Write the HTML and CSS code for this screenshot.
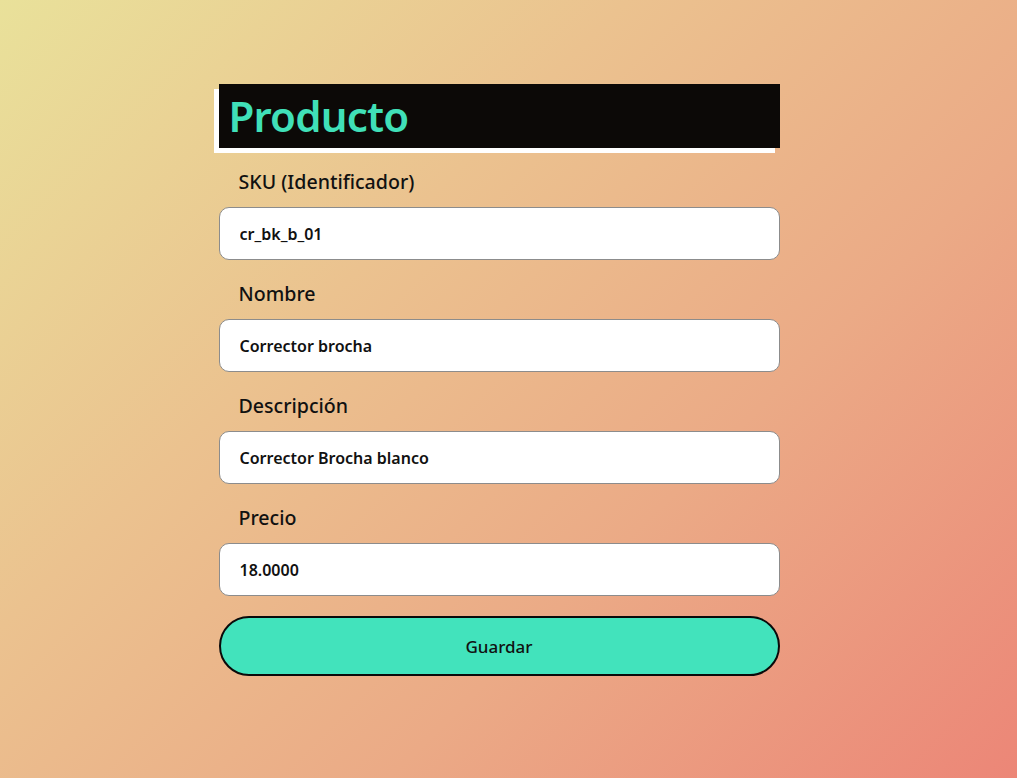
FILE: index.html
```html
<!DOCTYPE html>
<html lang="es">
<head>
<meta charset="utf-8">
<title>Producto</title>
<link rel="stylesheet" href="styles.css">
</head>
<body>
<main class="page">
  <form class="product-form">
    <h1 class="title">Producto</h1>
    <label class="field-label" for="sku">SKU (Identificador)</label>
    <input class="field-input" id="sku" type="text" value="cr_bk_b_01">
    <label class="field-label" for="nombre">Nombre</label>
    <input class="field-input" id="nombre" type="text" value="Corrector brocha">
    <label class="field-label" for="desc">Descripción</label>
    <input class="field-input" id="desc" type="text" value="Corrector Brocha blanco">
    <label class="field-label" for="precio">Precio</label>
    <input class="field-input" id="precio" type="text" value="18.0000">
    <button class="save-btn" type="button">Guardar</button>
  </form>
</main>
</body>
</html>
```

FILE: styles.css
```css
html, body {
  margin: 0;
  padding: 0;
}
body {
  min-height: 100vh;
  background: linear-gradient(135deg, #e9e19a 0%, #ebc28f 35%, #ebaa86 65%, #ec8677 100%);
  font-family: "Noto Sans", "Open Sans", sans-serif;
  color: #111;
}
.page {
  display: flex;
  justify-content: center;
  padding: 84px 19px 0 0;
  min-height: 778px;
  box-sizing: border-box;
}
.product-form {
  width: 561px;
  display: flex;
  flex-direction: column;
}
.title {
  margin: 0;
  height: 64px;
  line-height: 64px;
  padding-left: 10px;
  background: #0c0907;
  color: #40e0b8;
  font-size: 42px;
  font-weight: 600;
  letter-spacing: -0.8px;
  box-shadow: -5px 5px 0 #ffffff;
}
.field-label {
  margin: 21px 0 12px;
  padding-left: 20px;
  font-size: 19.6px;
  line-height: 26px;
  font-weight: 500;
  color: #111;
}
.field-input {
  height: 53px;
  box-sizing: border-box;
  border: 1px solid #8c8c8c;
  border-radius: 10px;
  background: #fff;
  padding: 0 20px;
  font-family: "Noto Sans", "Open Sans", sans-serif;
  font-size: 16px;
  font-weight: 600;
  color: #111;
}
.save-btn {
  margin-top: 20px;
  height: 60px;
  border: 2px solid #0a0a0a;
  border-radius: 30px;
  background: #42e3bc;
  font-family: "Noto Sans", "Open Sans", sans-serif;
  font-size: 17px;
  font-weight: 500;
  color: #111;
}
```
